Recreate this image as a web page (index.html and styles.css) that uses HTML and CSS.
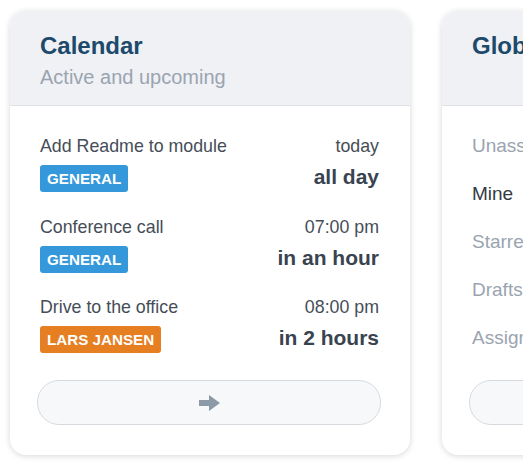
FILE: index.html
```html
<!DOCTYPE html>
<html>
<head>
<meta charset="utf-8">
<link rel="stylesheet" href="styles.css">
</head>
<body>
<div class="row">
  <section class="card">
    <header class="card-head">
      <h2 class="title">Calendar</h2>
      <p class="subtitle">Active and upcoming</p>
    </header>
    <div class="card-body">
      <div class="events">
        <div class="event">
          <span class="ev-name">Add Readme to module</span>
          <span class="ev-time">today</span>
          <span class="badge badge-blue">GENERAL</span>
          <span class="ev-rel">all day</span>
        </div>
        <div class="event">
          <span class="ev-name">Conference call</span>
          <span class="ev-time">07:00 pm</span>
          <span class="badge badge-blue">GENERAL</span>
          <span class="ev-rel">in an hour</span>
        </div>
        <div class="event">
          <span class="ev-name">Drive to the office</span>
          <span class="ev-time">08:00 pm</span>
          <span class="badge badge-orange">LARS JANSEN</span>
          <span class="ev-rel">in 2 hours</span>
        </div>
      </div>
      <button class="more">
        <svg width="21" height="16" viewBox="0 0 21 16"><path d="M0 5h10V0l11 8-11 8v-5H0z" fill="#8c9aa8"/></svg>
      </button>
    </div>
  </section>
  <section class="card">
    <header class="card-head">
      <h2 class="title">Global inbox</h2>
      <p class="subtitle">&nbsp;</p>
    </header>
    <div class="card-body">
      <ul class="nav">
        <li>Unassigned</li>
        <li class="active">Mine</li>
        <li>Starred</li>
        <li>Drafts</li>
        <li>Assigned</li>
      </ul>
      <button class="more">
        <svg width="21" height="16" viewBox="0 0 21 16"><path d="M0 5h10V0l11 8-11 8v-5H0z" fill="#8c9aa8"/></svg>
      </button>
    </div>
  </section>
</div>
</body>
</html>
```

FILE: styles.css
```css
html, body {
  margin: 0;
  background: #ffffff;
  overflow: hidden;
}
body {
  padding: 11px 10px;
  font-family: "Liberation Sans", Arial, sans-serif;
}
.row {
  display: flex;
  gap: 32px;
}
.card {
  flex: 0 0 400px;
  width: 400px;
  height: 444px;
  box-sizing: border-box;
  background: #fff;
  border-radius: 16px;
  box-shadow: 0 1px 6px rgba(0, 0, 0, 0.16);
  overflow: hidden;
  display: flex;
  flex-direction: column;
}
.card-head {
  background: #eff1f5;
  border-bottom: 1px solid #dde1e6;
  padding: 20px 30px 14px;
}
.title {
  margin: 0;
  font-size: 24px;
  line-height: 29px;
  font-weight: 700;
  color: #1d4a6b;
}
.subtitle {
  margin: 3px 0 0;
  font-size: 20px;
  line-height: 28px;
  color: #9aa4b0;
}
.card-body {
  flex: 1;
  display: flex;
  flex-direction: column;
  padding: 27px 31px 30px 30px;
}
.events {
  display: flex;
  flex-direction: column;
  gap: 21.5px;
}
.event {
  display: grid;
  grid-template-columns: 1fr auto;
  grid-template-rows: 26px 27px;
  row-gap: 6px;
  align-items: center;
}
.ev-name, .ev-time {
  font-size: 17.8px;
  line-height: 26px;
  color: #454d57;
}
.ev-time { text-align: right; }
.ev-rel {
  align-self: start;
  text-align: right;
  font-size: 21px;
  line-height: 23px;
  font-weight: 700;
  color: #3a4350;
}
.badge {
  justify-self: start;
  height: 27px;
  line-height: 27px;
  padding: 0 7px;
  border-radius: 3px;
  color: #fff;
  font-size: 15.2px;
  font-weight: 700;
}
.badge-blue { background: #3498db; }
.badge-orange { background: #e67e22; }
.more {
  margin: auto -2px 0 -3px;
  height: 45px;
  border-radius: 22px;
  border: 1px solid #d6d9dd;
  background: #f7f8f9;
  display: flex;
  align-items: center;
  justify-content: center;
  padding: 0;
}
.more svg { display: block; }
.nav {
  list-style: none;
  margin: -11px 0 0;
  padding: 0;
}
.nav li {
  font-size: 19px;
  line-height: 48px;
  color: #9aa4b0;
  white-space: nowrap;
}
.nav li.active { color: #333a44; }
```
